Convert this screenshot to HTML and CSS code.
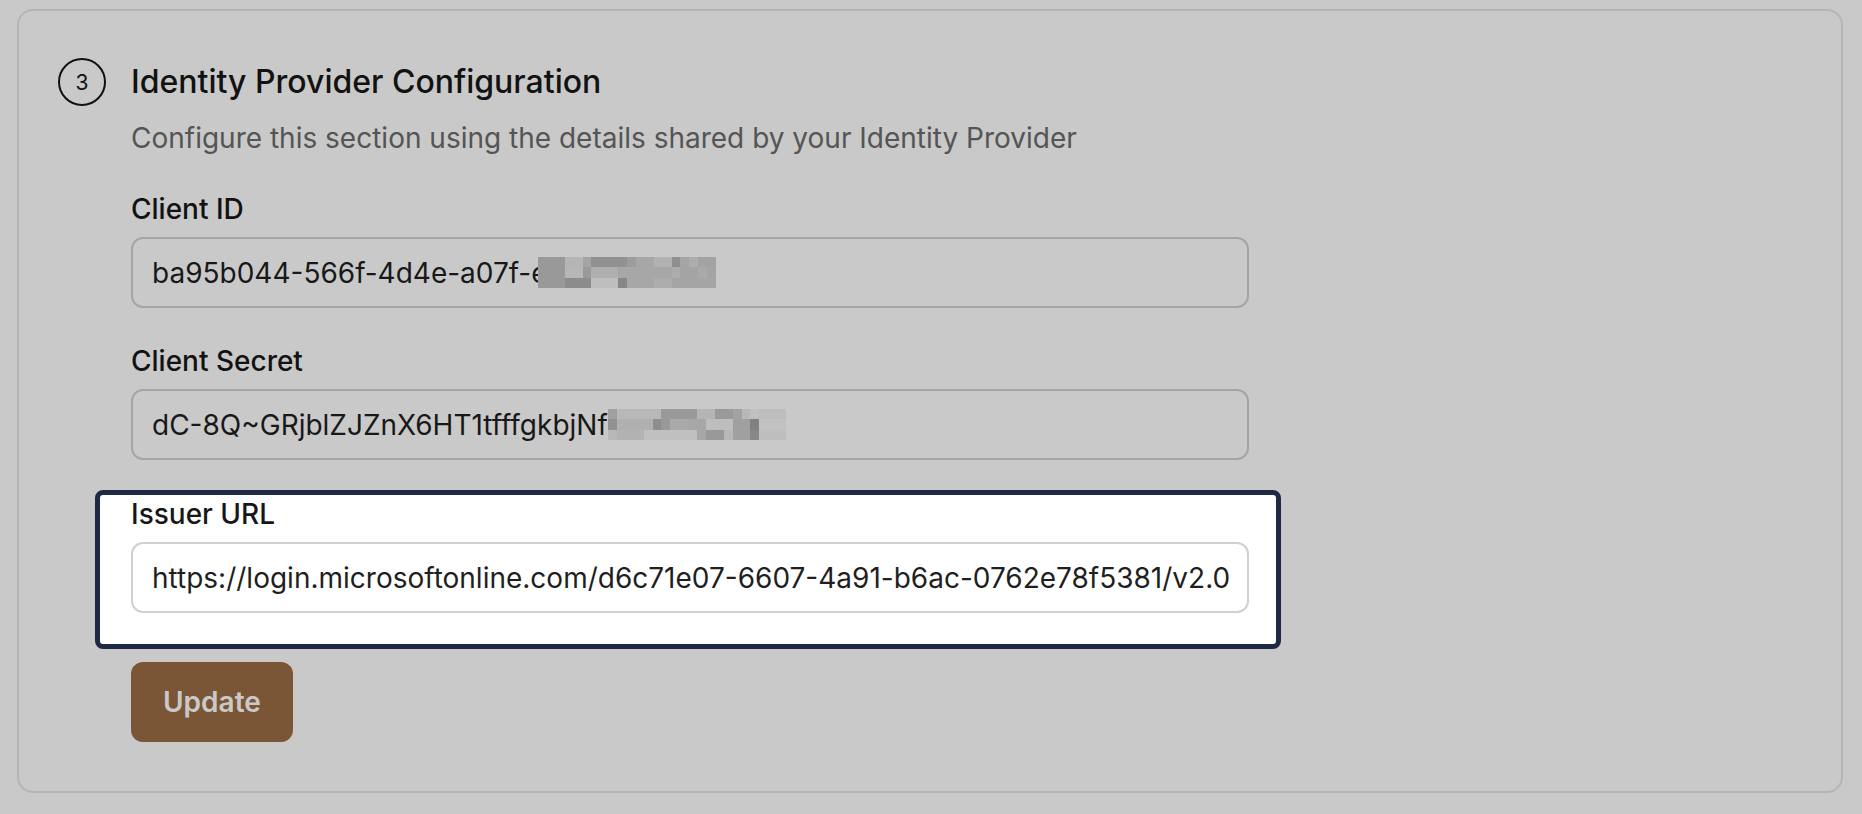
FILE: index.html
```html
<!DOCTYPE html>
<html>
<head>
    <meta charset="UTF-8">
    <title>SSO Settings</title>
    <link rel="stylesheet" href="styles.css">
</head>
<body>
    <div class="page">
        <section class="card">
            <div class="step-head">
                <span class="step-num">3</span>
                <h2 class="step-title">Identity Provider Configuration</h2>
            </div>

            <div class="step-body">
                <p class="step-desc">Configure this section using the details shared by your Identity Provider</p>

                <div class="field">
                    <label class="field-label">Client ID</label>
                    <div class="field-box">
                        <span>ba95b044-566f-4d4e-a07f-e</span>
                        <!-- hidden part of the id -->
                        <svg class="redact redact-id" viewBox="0 0 20 3" width="178" height="31" preserveAspectRatio="none" shape-rendering="crispEdges">
                            <rect x="0" y="0" width="3" height="1" fill="#c3c3c3"/>
                            <rect x="3" y="0" width="2" height="1" fill="#e6e6e6"/>
                            <rect x="5" y="0" width="1" height="1" fill="#d0d0d0"/>
                            <rect x="6" y="0" width="4" height="1" fill="#b8b8b8"/>
                            <rect x="10" y="0" width="1" height="1" fill="#c6c6c6"/>
                            <rect x="11" y="0" width="2" height="1" fill="#d4d4d4"/>
                            <rect x="13" y="0" width="2" height="1" fill="#e2e2e2"/>
                            <rect x="15" y="0" width="1" height="1" fill="#b6b6b6"/>
                            <rect x="16" y="0" width="1" height="1" fill="#d2d2d2"/>
                            <rect x="17" y="0" width="1" height="1" fill="#dcdcdc"/>
                            <rect x="18" y="0" width="2" height="1" fill="#cfcfcf"/>

                            <rect x="0" y="1" width="3" height="1" fill="#c3c3c3"/>
                            <rect x="3" y="1" width="2" height="1" fill="#e8e8e8"/>
                            <rect x="5" y="1" width="1" height="1" fill="#c3c3c3"/>
                            <rect x="6" y="1" width="3" height="1" fill="#dedede"/>
                            <rect x="9" y="1" width="6" height="1" fill="#d4d4d4"/>
                            <rect x="15" y="1" width="1" height="1" fill="#dadada"/>
                            <rect x="16" y="1" width="2" height="1" fill="#d0d0d0"/>
                            <rect x="18" y="1" width="1" height="1" fill="#d8d8d8"/>
                            <rect x="19" y="1" width="1" height="1" fill="#d0d0d0"/>

                            <rect x="0" y="2" width="3" height="1" fill="#c3c3c3"/>
                            <rect x="3" y="2" width="3" height="1" fill="#b2b2b2"/>
                            <rect x="6" y="2" width="3" height="1" fill="#f2f2f2"/>
                            <rect x="9" y="2" width="1" height="1" fill="#acacac"/>
                            <rect x="10" y="2" width="3" height="1" fill="#d4d4d4"/>
                            <rect x="13" y="2" width="2" height="1" fill="#dcdcdc"/>
                            <rect x="15" y="2" width="5" height="1" fill="#d2d2d2"/>
                        </svg>
                    </div>
                </div>

                <div class="field">
                    <label class="field-label">Client Secret</label>
                    <div class="field-box">
                        <span>dC-8Q~GRjblZJZnX6HT1tfffgkbjNf</span>
                        <svg class="redact" viewBox="0 0 20 3" width="178" height="31" preserveAspectRatio="none" shape-rendering="crispEdges">
                            <rect x="0" y="0" width="1" height="1" fill="#cccccc"/>
                            <rect x="1" y="0" width="5" height="1" fill="#eaeaea"/>
                            <rect x="6" y="0" width="4" height="1" fill="#c3c3c3"/>
                            <rect x="10" y="0" width="2" height="1" fill="#e6e6e6"/>
                            <rect x="12" y="0" width="2" height="1" fill="#c4c4c4"/>
                            <rect x="14" y="0" width="1" height="1" fill="#cecece"/>
                            <rect x="15" y="0" width="1" height="1" fill="#eaeaea"/>
                            <rect x="16" y="0" width="1" height="1" fill="#f4f4f4"/>
                            <rect x="17" y="0" width="3" height="1" fill="#f0f0f0"/>

                            <rect x="0" y="1" width="1" height="1" fill="#b8b8b8"/>
                            <rect x="1" y="1" width="4" height="1" fill="#e0e0e0"/>
                            <rect x="5" y="1" width="1" height="1" fill="#b5b5b5"/>
                            <rect x="6" y="1" width="1" height="1" fill="#c3c3c3"/>
                            <rect x="7" y="1" width="2" height="1" fill="#d8d8d8"/>
                            <rect x="9" y="1" width="2" height="1" fill="#d4d4d4"/>
                            <rect x="11" y="1" width="3" height="1" fill="#f2f2f2"/>
                            <rect x="14" y="1" width="2" height="1" fill="#cccccc"/>
                            <rect x="16" y="1" width="1" height="1" fill="#a4a4a4"/>
                            <rect x="17" y="1" width="3" height="1" fill="#f6f6f6"/>

                            <rect x="0" y="2" width="1" height="1" fill="#eaeaea"/>
                            <rect x="1" y="2" width="3" height="1" fill="#e2e2e2"/>
                            <rect x="4" y="2" width="6" height="1" fill="#f4f4f4"/>
                            <rect x="10" y="2" width="1" height="1" fill="#d4d4d4"/>
                            <rect x="11" y="2" width="2" height="1" fill="#c3c3c3"/>
                            <rect x="13" y="2" width="1" height="1" fill="#eaeaea"/>
                            <rect x="14" y="2" width="2" height="1" fill="#cccccc"/>
                            <rect x="16" y="2" width="1" height="1" fill="#adadad"/>
                            <rect x="17" y="2" width="3" height="1" fill="#f2f2f2"/>
                        </svg>
                    </div>
                </div>

                <!-- field highlighted by the setup tour -->
                <div class="field spotlight">
                    <label class="field-label">Issuer URL</label>
                    <div class="field-box">
                        <span>https://login.microsoftonline.com/d6c71e07-6607-4a91-b6ac-0762e78f5381/v2.0</span>
                    </div>
                </div>

                <button class="btn-update">Update</button>
            </div>
        </section>
    </div>
</body>
</html>
```

FILE: styles.css
```css
/* Base */
body {
    margin: 0;
    font-family: "Inter", "Noto Sans", sans-serif;
    background: #ffffff;
    color: #171717;
}

.page {
    padding: 9px 19px 23px 17px;
}

/* Step card */
.card {
    border: 2px solid #e6e6e6;
    border-radius: 16px;
    padding: 47px 40px 49px 39px;
    background: #ffffff;
}

.step-head {
    display: flex;
    align-items: center;
    gap: 25px;
}

.step-num {
    width: 48px;
    height: 48px;
    box-sizing: border-box;
    border: 2px solid #161616;
    border-radius: 50%;
    display: flex;
    align-items: center;
    justify-content: center;
    font-size: 21px;
    color: #161616;
}

.step-title {
    margin: 0;
    font-size: 32px;
    line-height: 40px;
    font-weight: 500;
    color: #171717;
}

.step-body {
    padding-left: 73px;
}

.step-desc {
    margin: 14px 0 0;
    font-size: 28px;
    line-height: 36px;
    color: #6c6c6c;
}

/* Form fields */
.field {
    margin-top: 35px;
    width: 1118px;
}

.field-label {
    display: block;
    font-size: 28px;
    line-height: 36px;
    font-weight: 500;
    color: #171717;
}

.field-box {
    margin-top: 10px;
    height: 71px;
    box-sizing: border-box;
    border: 2px solid #d2d2d2;
    border-radius: 12px;
    padding: 0 19px;
    display: flex;
    align-items: center;
    font-size: 28px;
    line-height: 36px;
    color: #1f1f1f;
    white-space: nowrap;
    overflow: hidden;
}

.redact {
    flex: none;
    display: block;
}

.redact-id {
    margin-left: -10px;
}

/* Tour highlight: dims everything around the field */
.spotlight {
    position: relative;
    z-index: 10;
    margin: 30px -32px -36px -36px;
    padding: 1px 27px 31px 31px;
    border: 5px solid #1e2a44;
    border-radius: 8px;
    background: #ffffff;
    box-shadow: 0 0 0 9999px rgba(0, 0, 0, 0.212);
}

.spotlight .field-box {
    border-color: #d0d0d0;
}

/* Buttons */
.btn-update {
    display: block;
    margin-top: 49px;
    padding: 20px 32px;
    border: none;
    border-radius: 12px;
    background: #9b6c45;
    color: #ffffff;
    font-family: inherit;
    font-size: 28px;
    line-height: 40px;
    font-weight: 600;
    cursor: pointer;
}
```
